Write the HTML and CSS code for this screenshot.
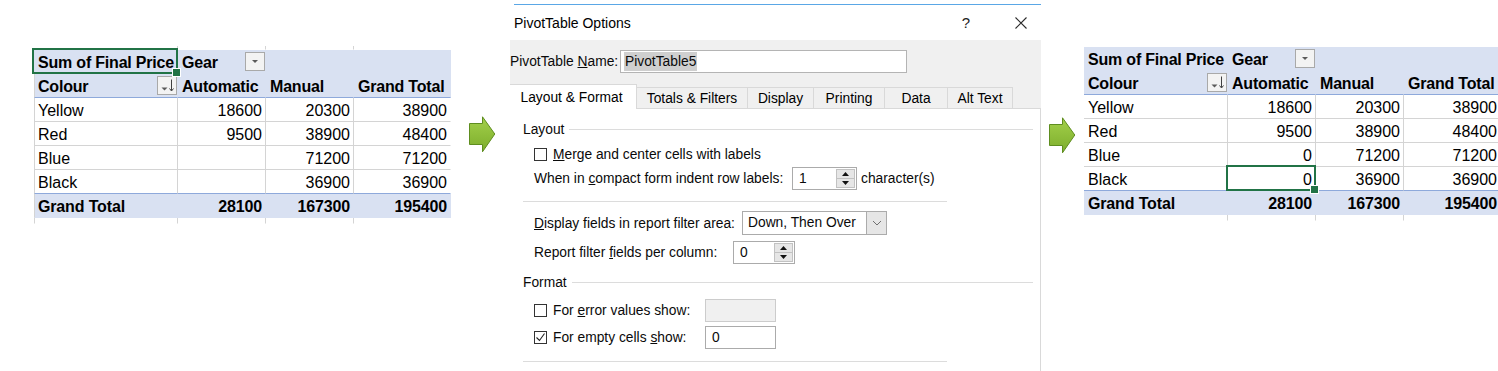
FILE: index.html
```html
<!DOCTYPE html>
<html>
<head>
<meta charset="utf-8">
<link rel="stylesheet" href="styles.css">
</head>
<body>
<div class="page">

  <div class="sheet sheet-left">
    <div class="c g"></div><div class="c g"></div><div class="c g"></div><div class="c g gD"></div>

    <div class="c h sel">Sum of Final Price</div>
    <div class="c h fc"><span class="tx">Gear</span><span class="dd"><svg width="8" height="5" viewBox="0 0 8 5"><path d="M1 1h6L4 4z" fill="#5a5a5a"/></svg></span></div>
    <div class="c h"></div>
    <div class="c h"></div>

    <div class="c h h2 lb fc"><span class="tx">Colour</span><span class="dd dd2"><svg width="18" height="17" viewBox="0 0 18 17"><path d="M3.5 10.5h6l-3 3z" fill="#5a5a5a"/><path d="M13.5 2.5v11" stroke="#404040" stroke-width="1"/><path d="M11.5 11.5l2 2.5 2-2.5" fill="none" stroke="#404040" stroke-width="1"/></svg></span></div>
    <div class="c h h2">Automatic</div>
    <div class="c h h2">Manual</div>
    <div class="c h h2">Grand Total</div>

    <div class="c d lb">Yellow</div><div class="c d num">18600</div><div class="c d num">20300</div><div class="c d dD num">38900</div>
    <div class="c d lb">Red</div><div class="c d num">9500</div><div class="c d num">38900</div><div class="c d dD num">48400</div>
    <div class="c d lb">Blue</div><div class="c d num"></div><div class="c d num">71200</div><div class="c d dD num">71200</div>
    <div class="c d last lb">Black</div><div class="c d last num"></div><div class="c d last num">36900</div><div class="c d last dD num">36900</div>

    <div class="c t lb">Grand Total</div><div class="c t num">28100</div><div class="c t num">167300</div><div class="c t num">195400</div>

    <div class="c g lb"></div><div class="c g"></div><div class="c g"></div><div class="c g gD"></div>
  </div>

  <svg class="arrow arrow-left" width="27" height="37" viewBox="0 0 27 37">
    <defs><linearGradient id="ga" x1="0" y1="0" x2="0" y2="1"><stop offset="0" stop-color="#a3d04a"/><stop offset="1" stop-color="#7cad2c"/></linearGradient></defs>
    <polygon points="0.5,7.5 13.5,7.5 13.5,0.8 25.8,18 13.5,35.8 13.5,28.5 0.5,28.5" fill="url(#ga)" stroke="#5e8d1f" stroke-width="1"/>
  </svg>

  <div class="dialog">
    <div class="accent"></div>
    <div class="titlebar">
      <span class="title">PivotTable Options</span>
      <span class="help">?</span>
      <svg class="close" width="12" height="12" viewBox="0 0 12 12"><path d="M0.5 0.5L11.5 11.5M11.5 0.5L0.5 11.5" stroke="#2b2b2b" stroke-width="1.1"/></svg>
    </div>
    <div class="topbar">
      <div class="name-row">
        <span class="name-label">PivotTable <u>N</u>ame:</span>
        <div class="name-input"><span class="hl">PivotTable5</span></div>
      </div>
      <div class="tabs">
        <div class="tab active w-layout">Layout &amp; Format</div>
        <div class="tab w-totals">Totals &amp; Filters</div>
        <div class="tab w-display">Display</div>
        <div class="tab w-printing">Printing</div>
        <div class="tab w-data">Data</div>
        <div class="tab w-alt">Alt Text</div>
      </div>
    </div>
    <div class="panel">
      <div class="group-head head-layout"><span>Layout</span><span class="rule"></span></div>

      <div class="row row-merge">
        <span class="cb"></span>
        <span><u>M</u>erge and center cells with labels</span>
      </div>

      <div class="row row-compact">
        <span class="lbl lbl-compact">When in <u>c</u>ompact form indent row labels:</span>
        <div class="spin spin-compact">
          <span class="spin-val">1</span>
          <span class="spin-btns">
            <span class="sb sb-up"><svg width="7" height="4" viewBox="0 0 7 4"><path d="M0 4h7L3.5 0z" fill="#111"/></svg></span>
            <span class="sb"><svg width="7" height="4" viewBox="0 0 7 4"><path d="M0 0h7L3.5 4z" fill="#111"/></svg></span>
          </span>
        </div>
        <span class="after">character(s)</span>
      </div>

      <div class="sep sep-1"></div>

      <div class="row row-display">
        <span class="lbl lbl-display"><u>D</u>isplay fields in report filter area:</span>
        <div class="select">
          <span class="select-val">Down, Then Over</span>
          <span class="select-btn"><svg width="10" height="6" viewBox="0 0 10 6"><path d="M1 1l4 4 4-4" fill="none" stroke="#707070" stroke-width="1"/></svg></span>
        </div>
      </div>

      <div class="row row-report">
        <span class="lbl lbl-report">Report filter <u>f</u>ields per column:</span>
        <div class="spin spin-report">
          <span class="spin-val">0</span>
          <span class="spin-btns">
            <span class="sb sb-up"><svg width="7" height="4" viewBox="0 0 7 4"><path d="M0 4h7L3.5 0z" fill="#111"/></svg></span>
            <span class="sb"><svg width="7" height="4" viewBox="0 0 7 4"><path d="M0 0h7L3.5 4z" fill="#111"/></svg></span>
          </span>
        </div>
      </div>

      <div class="group-head head-format"><span>Format</span><span class="rule"></span></div>

      <div class="row row-error">
        <span class="cb"></span>
        <span class="lbl lbl-cb">For <u>e</u>rror values show:</span>
        <span class="tbox disabled"></span>
      </div>

      <div class="row row-empty">
        <span class="cb"><svg width="11" height="11" viewBox="0 0 11 11"><path d="M1.5 5.5l3 3 5-7" fill="none" stroke="#222" stroke-width="1.1"/></svg></span>
        <span class="lbl lbl-cb">For empty cells <u>s</u>how:</span>
        <span class="tbox">0</span>
      </div>

      <div class="sep sep-2"></div>
    </div>
  </div>

  <svg class="arrow arrow-right" width="27" height="37" viewBox="0 0 27 37">
    <defs><linearGradient id="gb" x1="0" y1="0" x2="0" y2="1"><stop offset="0" stop-color="#a3d04a"/><stop offset="1" stop-color="#7cad2c"/></linearGradient></defs>
    <polygon points="0.5,7.5 13.5,7.5 13.5,0.8 25.8,18 13.5,35.8 13.5,28.5 0.5,28.5" fill="url(#gb)" stroke="#5e8d1f" stroke-width="1"/>
  </svg>

  <div class="sheet sheet-right">
    <div class="c h">Sum of Final Price</div>
    <div class="c h fc"><span class="tx">Gear</span><span class="dd"><svg width="8" height="5" viewBox="0 0 8 5"><path d="M1 1h6L4 4z" fill="#5a5a5a"/></svg></span></div>
    <div class="c h"></div>
    <div class="c h"></div>

    <div class="c h h2 fc"><span class="tx">Colour</span><span class="dd dd2"><svg width="18" height="17" viewBox="0 0 18 17"><path d="M3.5 10.5h6l-3 3z" fill="#5a5a5a"/><path d="M13.5 2.5v11" stroke="#404040" stroke-width="1"/><path d="M11.5 11.5l2 2.5 2-2.5" fill="none" stroke="#404040" stroke-width="1"/></svg></span></div>
    <div class="c h h2">Automatic</div>
    <div class="c h h2">Manual</div>
    <div class="c h h2">Grand Total</div>

    <div class="c d">Yellow</div><div class="c d num">18600</div><div class="c d num">20300</div><div class="c d dD num">38900</div>
    <div class="c d">Red</div><div class="c d num">9500</div><div class="c d num">38900</div><div class="c d dD num">48400</div>
    <div class="c d">Blue</div><div class="c d num">0</div><div class="c d num">71200</div><div class="c d dD num">71200</div>
    <div class="c d last">Black</div><div class="c d last num sel">0</div><div class="c d last num">36900</div><div class="c d last dD num">36900</div>

    <div class="c t">Grand Total</div><div class="c t num">28100</div><div class="c t num">167300</div><div class="c t num">195400</div>

    <div class="c g"></div><div class="c g"></div><div class="c g"></div><div class="c g gD"></div>
  </div>

</div>
</body>
</html>
```

FILE: styles.css
```css
* { box-sizing: border-box; }
html, body { margin: 0; padding: 0; }
body {
  width: 1498px;
  height: 371px;
  overflow: hidden;
  background: #fff;
  color: #000;
  font-family: "Liberation Sans", Arial, sans-serif;
}
.page {
  display: flex;
  align-items: flex-start;
  width: 1498px;
  height: 371px;
  overflow: hidden;
}

/* ---------- pivot sheets ---------- */
.sheet {
  flex: none;
  display: grid;
  grid-template-columns: 144px 88px 88px 97px;
  font-size: 16px;
}
.sheet-left {
  margin-left: 34px;
  margin-top: 46px;
  grid-template-rows: 4px repeat(7, 24px) 6px;
}
.sheet-right {
  margin-left: 8px;
  margin-top: 47px;
  grid-template-rows: repeat(7, 24px) 6px;
}
.c {
  border-right: 1px solid transparent;
  border-bottom: 1px solid transparent;
  padding: 2px 3px 0 4px;
  line-height: 21px;
  white-space: nowrap;
  min-width: 0;
}
.h {
  background: #d9e1f2;
  font-weight: bold;
  letter-spacing: -0.2px;
  border-right-color: #d9e1f2;
  border-bottom-color: #d9e1f2;
}
.h2 { border-bottom-color: #8ea9db; }
.d {
  background: #fff;
  border-right-color: #d4d4d4;
  border-bottom-color: #d4d4d4;
}
.d.last { border-bottom-color: #8ea9db; }
.d.dD { border-right-color: transparent; }
.t {
  background: #d9e1f2;
  font-weight: bold;
  letter-spacing: -0.15px;
  border-right-color: #d9e1f2;
  border-bottom-color: #d9e1f2;
}
.g {
  padding: 0;
  border-right-color: #d4d4d4;
}
.g.gD { border-right-color: transparent; }
.lb {
  border-left: 1px solid #d4d4d4;
  padding-left: 3px;
}
.num { text-align: right; }

.fc {
  display: flex;
  align-items: center;
  justify-content: space-between;
  padding-top: 0;
  padding-right: 0;
}
.fc .tx {
  padding-top: 2px;
  line-height: 21px;
}
.dd {
  flex: none;
  width: 20px;
  height: 19px;
  border: 1px solid #a9a9a9;
  background: #f3f3f3;
  display: flex;
  align-items: center;
  justify-content: center;
}
.dd2 { height: 19px; }

.sel {
  position: relative;
  z-index: 2;
}
.sel::after {
  content: "";
  position: absolute;
  left: -2px;
  top: -2px;
  right: -1px;
  bottom: -1px;
  border: 2px solid #217346;
}
.sel::before {
  content: "";
  position: absolute;
  right: -4px;
  bottom: -4px;
  width: 7px;
  height: 7px;
  background: #217346;
  border: 1px solid #fff;
  z-index: 3;
}

/* ---------- arrows ---------- */
.arrow { flex: none; display: block; }
.arrow-left { margin-left: 18px; margin-top: 116px; }
.arrow-right { margin-left: 8px; margin-top: 117px; }

/* ---------- dialog ---------- */
.dialog {
  flex: none;
  width: 531px;
  height: 371px;
  margin-left: 14px;
  overflow: hidden;
  background: #fff;
  display: flex;
  flex-direction: column;
  font-size: 13.8px;
  color: #0a0a0a;
}
.accent {
  height: 1px;
  margin: 4px 0 0 4px;
  background: #5aa7e6;
}
.titlebar {
  height: 35px;
  display: flex;
  align-items: center;
  padding-left: 4px;
}
.title { font-size: 14px; color: #000; }
.help {
  margin-left: auto;
  margin-right: 45px;
  font-size: 15px;
  color: #222;
}
.close { margin-right: 14px; flex: none; }

.topbar {
  height: 68px;
  background: #f0f0f0;
  display: flex;
  flex-direction: column;
}
.name-row {
  display: flex;
  align-items: center;
  margin-top: 10px;
  height: 23px;
}
.name-label {
  width: 110px;
  flex: none;
  white-space: nowrap;
}
.name-input {
  width: 287px;
  height: 23px;
  border: 1px solid #b4b4b4;
  background: #fff;
  padding: 1px 0 1px 3px;
  line-height: 19px;
}
.hl {
  display: inline-block;
  background: #cfcfcf;
  padding: 0 1px;
  line-height: 19px;
}
.tabs {
  margin-top: auto;
  height: 24px;
  display: flex;
  align-items: flex-end;
  margin-left: -4px;
}
.tab {
  flex: none;
  height: 21px;
  border: 1px solid #d9d9d9;
  border-bottom: none;
  margin-left: -1px;
  display: flex;
  align-items: center;
  justify-content: center;
  background: #f0f0f0;
  color: #000;
  padding-top: 1px;
}
.tab.active {
  margin-left: 0;
  height: 25px;
  margin-bottom: -1px;
  background: #fff;
  position: relative;
  z-index: 1;
  padding-top: 0;
}
.w-layout { width: 131px; }
.w-totals { width: 112px; }
.w-display { width: 67px; }
.w-printing { width: 72px; }
.w-data { width: 64px; }
.w-alt { width: 66px; }

.panel {
  flex: 1;
  border-top: 1px solid #d9d9d9;
  border-right: 1px solid #d9d9d9;
  background: #fff;
  display: flex;
  flex-direction: column;
}
.group-head {
  display: flex;
  align-items: center;
  height: 16px;
  padding-left: 13px;
}
.group-head .rule {
  flex: 1;
  height: 1px;
  background: #dcdcdc;
  margin-left: 5px;
  margin-right: 7px;
}
.head-layout { margin-top: 12px; }
.head-format { margin-top: 10px; }

.row {
  display: flex;
  align-items: center;
  padding-left: 24px;
}
.row-merge { margin-top: 7px; height: 20px; }
.row-compact { margin-top: 3px; height: 23px; }
.row-display { margin-top: 9px; height: 24px; }
.row-report { margin-top: 6px; height: 23px; }
.row-error { margin-top: 9px; height: 23px; }
.row-empty { margin-top: 4px; height: 23px; }

.cb {
  flex: none;
  width: 13px;
  height: 13px;
  border: 1px solid #333;
  background: #fff;
  margin-right: 6px;
  display: flex;
  align-items: center;
  justify-content: center;
}
.lbl { flex: none; }
.lbl-compact { width: 258px; }
.lbl-display { width: 208px; }
.lbl-report { width: 199px; }
.lbl-cb { width: 152px; }
.after { margin-left: 4px; }

.spin {
  flex: none;
  display: flex;
  height: 23px;
  border: 1px solid #ababab;
  background: #fff;
}
.spin-compact { width: 65px; }
.spin-report { width: 62px; }
.spin-val {
  flex: 1;
  padding-left: 6px;
  line-height: 21px;
}
.spin-btns {
  width: 19px;
  margin: 1px;
  display: flex;
  flex-direction: column;
  border: 1px solid #c2c2c2;
}
.sb {
  flex: 1;
  background: #e6e6e6;
  display: flex;
  align-items: center;
  justify-content: center;
}
.sb-up { border-bottom: 1px solid #c2c2c2; }

.select {
  flex: none;
  display: flex;
  width: 145px;
  height: 24px;
  border: 1px solid #ababab;
  background: #fff;
}
.select-val {
  flex: 1;
  padding-left: 5px;
  line-height: 22px;
}
.select-btn {
  width: 20px;
  background: #e6e6e6;
  border-left: 1px solid #ababab;
  display: flex;
  align-items: center;
  justify-content: center;
}

.tbox {
  flex: none;
  width: 71px;
  height: 23px;
  border: 1px solid #ababab;
  background: #fff;
  padding-left: 6px;
  line-height: 21px;
}
.tbox.disabled {
  background: #f0f0f0;
  border-color: #cccccc;
}

.sep {
  height: 1px;
  background: #dcdcdc;
  margin-left: 13px;
  width: 424px;
}
.sep-1 { margin-top: 11px; }
.sep-2 { margin-top: 12px; }
```
